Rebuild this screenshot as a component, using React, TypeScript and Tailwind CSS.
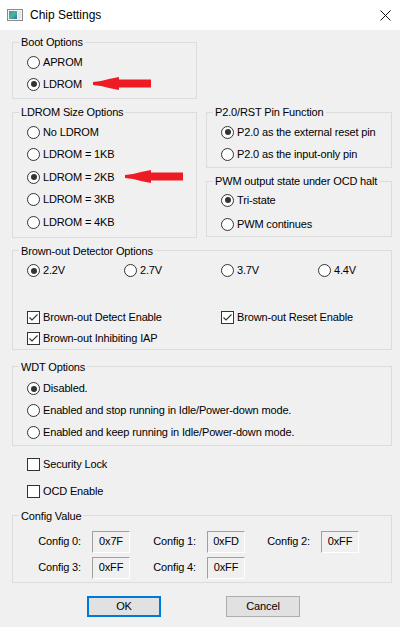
import React from 'react';

const font = { fontFamily: '"Liberation Sans", Arial, sans-serif' };

function Radio({ label, checked = false }: { label: string; checked?: boolean }) {
  return (
    <div className="flex items-center h-full">
      <span className="w-[13px] h-[13px] rounded-full border border-[#333] bg-white flex items-center justify-center shrink-0">
        {checked && <span className="w-[6px] h-[6px] rounded-full bg-[#333]" />}
      </span>
      <span className="ml-[3px] whitespace-nowrap">{label}</span>
    </div>
  );
}

function Check({ label, checked = false }: { label: string; checked?: boolean }) {
  return (
    <div className="flex items-center h-full">
      <span className="w-[13px] h-[13px] border border-[#333] bg-white flex items-center justify-center shrink-0">
        {checked && (
          <svg width="11" height="11" viewBox="0 0 11 11">
            <polyline points="1.5,5.5 4,8 9.5,2.5" fill="none" stroke="#333" strokeWidth="1.1" />
          </svg>
        )}
      </span>
      <span className="ml-[3px] whitespace-nowrap">{label}</span>
    </div>
  );
}

function Group({ title, className = '', inner = 'pl-[14px]', children }: { title: string; className?: string; inner?: string; children: React.ReactNode }) {
  return (
    <fieldset className={`border border-[#dcdcdc] ${className}`}>
      <legend className="ml-[6px] px-[2px] leading-[14px] h-[14px] whitespace-nowrap">{title}</legend>
      <div className={inner}>{children}</div>
    </fieldset>
  );
}

function Arrow() {
  return (
    <svg width="58" height="14" viewBox="0 0 58 14" className="ml-[11px]">
      <polygon points="0,5 8,4 16,2 26,0 26,2.5 58,2.5 58,10.5 26,10.5 26,13 16,11 8,9 0,8" fill="#ed1c24" />
    </svg>
  );
}

function ValueBox({ value }: { value: string }) {
  return (
    <div className="w-[38px] h-[22px] border-t border-l border-t-[#a0a0a0] border-l-[#a0a0a0] border-b border-r border-b-white border-r-white flex items-center justify-center">
      {value}
    </div>
  );
}

export default function App() {
  return (
    <div className="w-[400px] h-[627px] bg-[#f0f0f0] text-black text-[11px] leading-[13px] tracking-[-0.15px] overflow-hidden" style={font}>
      {/* title bar */}
      <div className="h-[30px] bg-white flex items-center tracking-normal">
        <svg width="16" height="12" viewBox="0 0 16 12" className="ml-[7px]">
          <defs>
            <linearGradient id="ic" x1="0" y1="0" x2="1" y2="1">
              <stop offset="0" stopColor="#3f8fd0" />
              <stop offset="0.5" stopColor="#4fb48a" />
              <stop offset="1" stopColor="#2f6fb8" />
            </linearGradient>
          </defs>
          <rect x="0.5" y="0.5" width="15" height="11" fill="#f4f4f4" stroke="#8a8a8a" />
          <rect x="2" y="2" width="8" height="8" fill="url(#ic)" />
          <rect x="11" y="2" width="3" height="8" fill="#dfe6ee" />
        </svg>
        <span className="ml-[7px] text-[12px]">Chip Settings</span>
        <svg width="11" height="11" viewBox="0 0 11 11" className="ml-auto mr-[9px]">
          <path d="M0.5 0.5 L10.5 10.5 M10.5 0.5 L0.5 10.5" stroke="#111" strokeWidth="1" />
        </svg>
      </div>

      <div className="pl-[12px] pr-[8px] pt-[5px]">
        {/* top two columns */}
        <div className="grid grid-cols-[185px_186px] gap-x-[9px] items-start">
          <div>
            <Group title="Boot Options" className="pt-[2px] pb-[3px]">
              <div className="h-[22px]"><Radio label="APROM" /></div>
              <div className="h-[22px] flex items-center">
                <Radio label="LDROM" checked />
                <Arrow />
              </div>
            </Group>
            <Group title="LDROM Size Options" className="mt-[6px] pt-[2px] pb-[3px]">
              <div className="h-[22.5px]"><Radio label="No LDROM" /></div>
              <div className="h-[22.5px]"><Radio label="LDROM = 1KB" /></div>
              <div className="h-[22.5px] flex items-center">
                <Radio label="LDROM = 2KB" checked />
                <Arrow />
              </div>
              <div className="h-[22.5px]"><Radio label="LDROM = 3KB" /></div>
              <div className="h-[22.5px]"><Radio label="LDROM = 4KB" /></div>
            </Group>
          </div>
          <div className="mt-[70px]">
            <Group title="P2.0/RST Pin Function" className="pt-[2px] pb-[2px]">
              <div className="h-[22px]"><Radio label="P2.0 as the external reset pin" checked /></div>
              <div className="h-[22px]"><Radio label="P2.0 as the input-only pin" /></div>
            </Group>
            <Group title="PWM output state under OCD halt" className="mt-[6px]">
              <div className="h-[24px]"><Radio label="Tri-state" checked /></div>
              <div className="h-[24px]"><Radio label="PWM continues" /></div>
            </Group>
          </div>
        </div>

        {/* brown-out */}
        <Group title="Brown-out Detector Options" className="mt-[6px] pt-[2px]">
          <div className="grid grid-cols-[97px_97px_97px_auto] h-[22px]">
            <Radio label="2.2V" checked />
            <Radio label="2.7V" />
            <Radio label="3.7V" />
            <Radio label="4.4V" />
          </div>
          <div className="grid grid-cols-[194px_auto] h-[21px] mt-[25px]">
            <Check label="Brown-out Detect Enable" checked />
            <Check label="Brown-out Reset Enable" checked />
          </div>
          <div className="h-[21px]"><Check label="Brown-out Inhibiting IAP" checked /></div>
        </Group>

        {/* WDT */}
        <Group title="WDT Options" className="mt-[10px] pt-[4px] pb-[1px]">
          <div className="h-[22px]"><Radio label="Disabled." checked /></div>
          <div className="h-[22px]"><Radio label="Enabled and stop running in Idle/Power-down mode." /></div>
          <div className="h-[22px]"><Radio label="Enabled and keep running in Idle/Power-down mode." /></div>
        </Group>

        <div className="pl-[15px]">
          <div className="h-[22px] mt-[8px]"><Check label="Security Lock" /></div>
          <div className="h-[22px] mt-[5px]"><Check label="OCD Enable" /></div>
        </div>

        {/* config */}
        <Group title="Config Value" className="mt-[6px] pt-[8px] pb-[3px]" inner="">
          <div className="grid grid-cols-[68px_38px_55px_38px_54px_38px] gap-x-[11px] gap-y-[4px] items-center">
            <span className="text-right">Config 0:</span>
            <ValueBox value="0x7F" />
            <span className="text-right">Config 1:</span>
            <ValueBox value="0xFD" />
            <span className="text-right">Config 2:</span>
            <ValueBox value="0xFF" />
            <span className="text-right">Config 3:</span>
            <ValueBox value="0xFF" />
            <span className="text-right">Config 4:</span>
            <ValueBox value="0xFF" />
          </div>
        </Group>

        {/* buttons */}
        <div className="flex mt-[13px] pl-[75px]">
          <button className="w-[74px] h-[21px] bg-[#e1e1e1] border-2 border-[#0078d7] text-[11px]">OK</button>
          <button className="w-[74px] h-[21px] bg-[#e1e1e1] border border-[#adadad] ml-[65px] text-[11px]">Cancel</button>
        </div>
      </div>
    </div>
  );
}
